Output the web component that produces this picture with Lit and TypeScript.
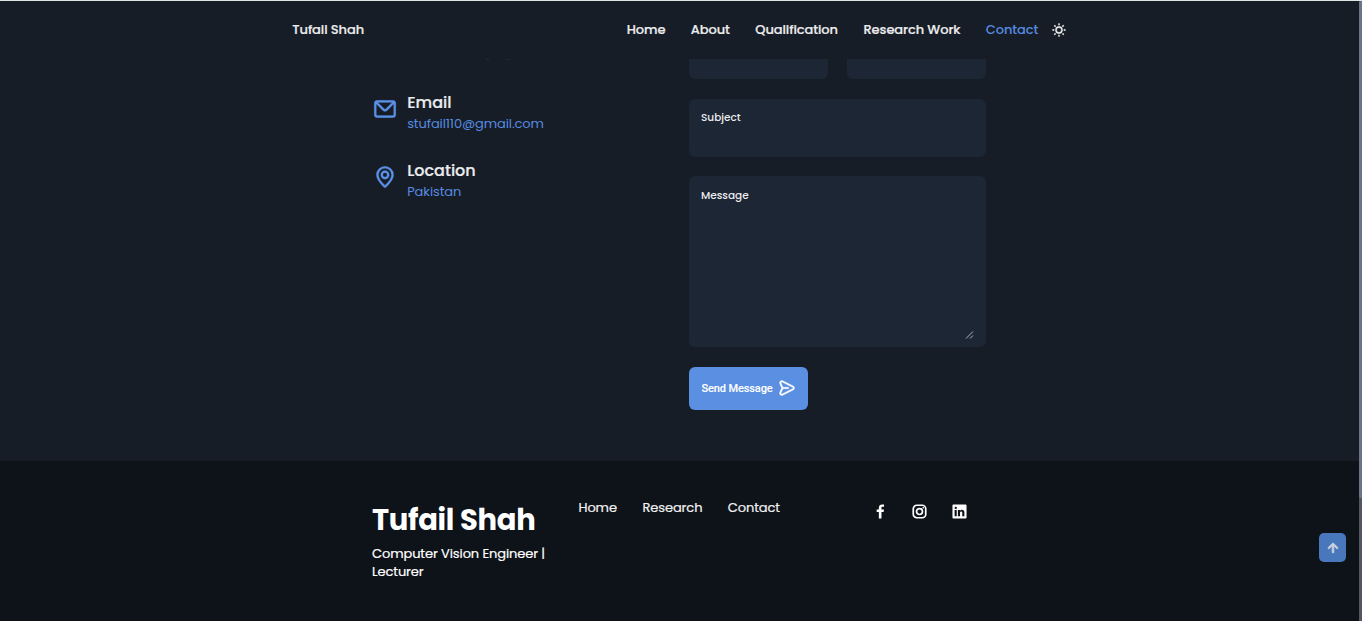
import { LitElement, html, css, svg } from "lit";
import { customElement } from "lit/decorators.js";

const icon = (path: string, size: number) => html`
  <svg width=${size} height=${size} viewBox="0 0 24 24" fill="currentColor" aria-hidden="true">${svg`<path d=${path}></path>`}</svg>`;

const SUN = "M5.64,17l-.71.71a1,1,0,0,0,0,1.41,1,1,0,0,0,1.41,0l.71-.71A1,1,0,0,0,5.64,17ZM5,12a1,1,0,0,0-1-1H3a1,1,0,0,0,0,2H4A1,1,0,0,0,5,12Zm7-7a1,1,0,0,0,1-1V3a1,1,0,0,0-2,0V4A1,1,0,0,0,12,5ZM5.64,7.05a1,1,0,0,0,.7.29,1,1,0,0,0,.71-.29,1,1,0,0,0,0-1.41l-.71-.71A1,1,0,0,0,4.93,6.34Zm12,.29a1,1,0,0,0,.7-.29l.71-.71a1,1,0,1,0-1.41-1.41L17,5.64a1,1,0,0,0,0,1.41A1,1,0,0,0,17.66,7.34ZM21,11H20a1,1,0,0,0,0,2h1a1,1,0,0,0,0-2Zm-9,8a1,1,0,0,0-1,1v1a1,1,0,0,0,2,0V20A1,1,0,0,0,12,19ZM18.36,17A1,1,0,0,0,17,18.36l.71.71a1,1,0,0,0,1.41,0,1,1,0,0,0,0-1.41ZM12,6.5A5.5,5.5,0,1,0,17.5,12,5.51,5.51,0,0,0,12,6.5Zm0,9A3.5,3.5,0,1,1,15.5,12,3.5,3.5,0,0,1,12,15.5Z";
const ENVELOPE = "M19,4H5A3,3,0,0,0,2,7V17a3,3,0,0,0,3,3H19a3,3,0,0,0,3-3V7A3,3,0,0,0,19,4Zm-.41,2-5.88,5.88a1,1,0,0,1-1.42,0L5.41,6ZM20,17a1,1,0,0,1-1,1H5a1,1,0,0,1-1-1V7.41l5.88,5.88a3,3,0,0,0,4.24,0L20,7.41Z";
const MARKER = "M12,2a8,8,0,0,0-8,7.92c0,5.48,7.05,11.58,7.35,11.84a1,1,0,0,0,1.3,0C13,21.5,20,15.4,20,9.92A8,8,0,0,0,12,2Zm0,17.65c-1.67-1.59-6-6-6-9.73a6,6,0,0,1,12,0C18,13.62,13.67,18.06,12,19.65ZM12,6a4,4,0,1,0,4,4A4,4,0,0,0,12,6Zm0,6a2,2,0,1,1,2-2A2,2,0,0,1,12,12Z";
const SEND = "M20.34,9.32l-14-7a3,3,0,0,0-4.08,3.9l2.4,5.37h0a1.06,1.06,0,0,1,0,.82l-2.4,5.37A3,3,0,0,0,5,22a3.14,3.14,0,0,0,1.35-.32l14-7a3,3,0,0,0,0-5.36Zm-.89,3.57-14,7a1,1,0,0,1-1.35-1.3l2.39-5.37A2,2,0,0,0,6.57,13h6.89a1,1,0,0,0,0-2H6.57a2,2,0,0,0-.08-.22L4.1,5.41a1,1,0,0,1,1.35-1.3l14,7a1,1,0,0,1,0,1.78Z";
const ARROW_UP = "M17.71,11.29l-5-5a1,1,0,0,0-.33-.21,1,1,0,0,0-.76,0,1,1,0,0,0-.33.21l-5,5a1,1,0,0,0,1.42,1.42L11,9.41V17a1,1,0,0,0,2,0V9.41l3.29,3.3a1,1,0,0,0,1.42,0A1,1,0,0,0,17.71,11.29Z";
const FACEBOOK = "M15.12,5.32H17V2.14A26.11,26.11,0,0,0,14.26,2C11.54,2,9.68,3.66,9.68,6.7V9.32H6.61v3.56H9.68V22h3.68V12.88h3.06l.46-3.56H13.36V7.05C13.36,6,13.64,5.32,15.12,5.32Z";
const LINKEDIN = "M20.47,2H3.53A1.45,1.45,0,0,0,2.06,3.43V20.57A1.45,1.45,0,0,0,3.53,22H20.47a1.45,1.45,0,0,0,1.47-1.43V3.43A1.45,1.45,0,0,0,20.47,2ZM8.09,18.74h-3v-9h3ZM6.59,8.48h0a1.56,1.56,0,1,1,0-3.12,1.57,1.57,0,1,1,0,3.12ZM18.91,18.74h-3V13.91c0-1.21-.43-2-1.52-2A1.65,1.65,0,0,0,12.85,13a2,2,0,0,0-.1.73v5h-3s0-8.18,0-9h3V11A3,3,0,0,1,15.46,9.5c2,0,3.45,1.29,3.45,4.06Z";

@customElement("app-root")
export class AppRoot extends LitElement {
  static styles = css`
    :host {
      display: block;
      position: relative;
      width: 1362px;
      height: 621px;
      overflow: hidden;
      background: #171d26;
      color: #ebecee;
      font-family: Poppins, Inter, "Open Sans", sans-serif;
      font-size: 13px;
      line-height: 18px;
    }
    * { box-sizing: border-box; }
    svg { display: block; flex: none; }
    .page { display: flex; flex-direction: column; height: 621px; }
    header {
      height: 59px;
      border-top: 1px solid #dde5e1;
      display: flex;
      align-items: flex-start;
      padding: 20px 0 0 292.3px;
      font-weight: 500;
      letter-spacing: -0.09px;
      white-space: nowrap;
      -webkit-text-stroke: 0.2px currentColor;
    }
    .brand { width: 334.5px; }
    .nav { display: flex; }
    .n-home { width: 64px; }
    .n-about { width: 64.5px; }
    .n-qual { width: 108.2px; }
    .n-work { width: 122.3px; }
    .n-contact { width: 65.1px; color: #568be0; -webkit-text-stroke: 0; }
    .nav svg { margin-top: 1px; stroke: currentColor; stroke-width: 0.4; }
    main { display: flex; height: 402px; padding-left: 372px; }
    .info { width: 317px; }
    .remnant { display: flex; gap: 18px; height: 34px; padding: 0 0 0 114px; }
    .remnant i { width: 3px; height: 1px; background: #222c3b; }
    .item { display: flex; height: 68px; color: #5a90e6; }
    .item svg { margin-top: 3.4px; stroke: currentColor; stroke-width: 0.2; }
    .item .copy { padding-left: 9.2px; }
    .item h3 {
      margin: 0;
      color: #ebecee;
      font-size: 16px;
      font-weight: 500;
      line-height: 20px;
      -webkit-text-stroke: 0.2px currentColor;
    }
    .item p { margin: 2px 0 0; color: #568be0; line-height: 18px; letter-spacing: -0.1px; }
    .form { width: 297px; }
    .pair { display: flex; gap: 19px; margin-bottom: 20px; }
    .pair div { flex: 1; height: 20px; background: #1d2635; border-radius: 0 0 6px 6px; }
    .field {
      background: #1d2635;
      border-radius: 6px;
      padding: 11px 12px;
      font-size: 10.5px;
      font-weight: 500;
      line-height: 15px;
    }
    .subject { height: 58px; margin-bottom: 19px; }
    .message {
      height: 171px;
      margin-bottom: 20px;
      display: flex;
      flex-direction: column;
      justify-content: space-between;
      padding: 12px 12px 8px;
    }
    .grip { align-self: flex-end; }
    .send {
      display: flex;
      align-items: center;
      width: 119px;
      height: 43px;
      padding: 0 0 1px 12.5px;
      border: 0;
      border-radius: 6px;
      background: #5a8fe1;
      color: #fff;
      font: 500 11px Roboto, "Liberation Sans", sans-serif;
      letter-spacing: -0.12px;
      white-space: nowrap;
      -webkit-text-stroke: 0.1px currentColor;
    }
    .send svg { margin: -1px 0 0 5px; stroke: currentColor; stroke-width: 0.5; }
    footer { flex: 1; background: #0e1219; color: #fff; display: flex; padding-left: 372px; white-space: nowrap; }
    .who { width: 206.5px; padding-top: 39px; }
    .who h1 { margin: 0; font-size: 29px; line-height: 40px; font-weight: 700; letter-spacing: -0.3px; }
    .who p { margin: 5px 0 0; letter-spacing: -0.1px; -webkit-text-stroke: 0.2px currentColor; }
    .links { display: flex; padding-top: 38px; width: 293px; color: #f2f2f3; letter-spacing: -0.1px; -webkit-text-stroke: 0.2px currentColor; }
    .l-home { width: 64px; }
    .l-research { width: 85.3px; }
    .social { display: flex; gap: 22.6px; padding-top: 42px; }
    .top {
      position: absolute;
      left: 1319px;
      top: 533px;
      width: 27px;
      height: 29px;
      border-radius: 5px;
      background: #4977bb;
      color: #cdd3de;
      display: grid;
      place-items: center;
    }
    .top svg { stroke: currentColor; stroke-width: 0.8; }
    .track { position: absolute; right: 0; top: 1px; width: 3px; height: 620px; background: #525761; }
    .thumb { height: 497px; background: #6b7588; border-radius: 2px 0 0 2px; }
  `;

  render() {
    return html`
      <div class="page">
        <header>
          <span class="brand">Tufail Shah</span>
          <nav class="nav">
            <span class="n-home">Home</span>
            <span class="n-about">About</span>
            <span class="n-qual">Qualification</span>
            <span class="n-work">Research Work</span>
            <span class="n-contact">Contact</span>
            ${icon(SUN, 16)}
          </nav>
        </header>
        <main>
          <section class="info">
            <div class="remnant"><i></i><i></i></div>
            <div class="item">
              ${icon(ENVELOPE, 26)}
              <div class="copy"><h3>Email</h3><p>stufail110@gmail.com</p></div>
            </div>
            <div class="item">
              ${icon(MARKER, 26)}
              <div class="copy"><h3>Location</h3><p>Pakistan</p></div>
            </div>
          </section>
          <section class="form">
            <div class="pair"><div></div><div></div></div>
            <div class="field subject">Subject</div>
            <div class="field message">
              <span>Message</span>
              <svg class="grip" width="9" height="9" viewBox="0 0 9 9" stroke="#c3c5c9" stroke-width="0.9">
                <path d="M1 8.5L8 1.5M5 8.5L8 5.5"></path>
              </svg>
            </div>
            <button class="send">Send Message${icon(SEND, 18)}</button>
          </section>
        </main>
        <footer>
          <div class="who">
            <h1>Tufail Shah</h1>
            <p>Computer Vision Engineer |<br />Lecturer</p>
          </div>
          <nav class="links">
            <span class="l-home">Home</span>
            <span class="l-research">Research</span>
            <span>Contact</span>
          </nav>
          <div class="social">
            ${icon(FACEBOOK, 17)}
            <svg width="17" height="17" viewBox="0 0 24 24" fill="none" stroke="currentColor" stroke-width="2.4">
              <rect x="3.2" y="3.2" width="17.6" height="17.6" rx="5"></rect>
              <circle cx="12" cy="12" r="4.2"></circle>
              <circle cx="17.3" cy="6.7" r="1.2" fill="currentColor" stroke="none"></circle>
            </svg>
            ${icon(LINKEDIN, 17)}
          </div>
        </footer>
      </div>
      <div class="top">${icon(ARROW_UP, 20)}</div>
      <div class="track"><div class="thumb"></div></div>
    `;
  }
}
